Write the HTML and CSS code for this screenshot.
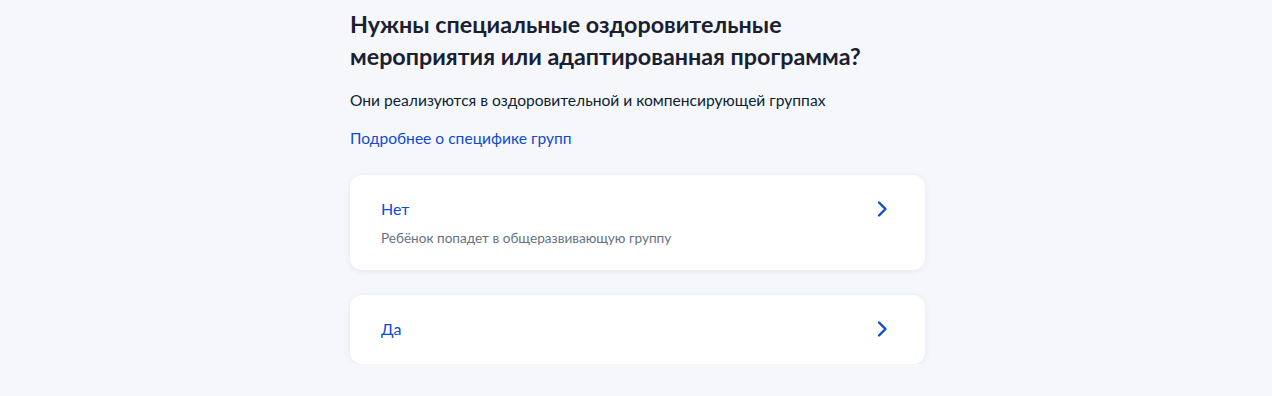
FILE: index.html
```html
<!DOCTYPE html>
<html>
	<head>
		<meta charset="utf-8">
		<title>Оздоровительные мероприятия</title>
		<link rel="stylesheet" href="styles.css">
	</head>
	<body>
		<div class="page">
			<h1 class="title">Нужны специальные оздоровительные<br>мероприятия или адаптированная программа?</h1>
			<p class="lead">Они реализуются в оздоровительной и компенсирующей группах</p>
			<a class="more" href="#">Подробнее о специфике групп</a>

			<div class="options">
				<a class="option" href="#">
					<div class="option-text">
						<div class="option-title">Нет</div>
						<div class="option-hint">Ребёнок попадет в общеразвивающую группу</div>
					</div>
					<svg class="chevron" width="24" height="24" viewBox="0 0 24 24"><path d="M9 5.5l6.5 6.5L9 18.5" fill="none" stroke="#0d4cd3" stroke-width="2.4" stroke-linecap="round" stroke-linejoin="round"/></svg>
				</a>
				<a class="option" href="#">
					<div class="option-text">
						<div class="option-title">Да</div>
					</div>
					<svg class="chevron" width="24" height="24" viewBox="0 0 24 24"><path d="M9 5.5l6.5 6.5L9 18.5" fill="none" stroke="#0d4cd3" stroke-width="2.4" stroke-linecap="round" stroke-linejoin="round"/></svg>
				</a>
			</div>
		</div>
	</body>
</html>
```

FILE: styles.css
```css
body {
	margin: 0;
	background: #f5f7fb;
	font-family: Lato, "Noto Sans", sans-serif;
	color: #0b1f33;
}

.page {
	width: 575px;
	margin-left: calc(50% - 286px);
	padding-top: 8px;
}

.title {
	margin: 0;
	font-size: 23.3px;
	line-height: 32px;
	font-weight: 700;
	color: #1a2030;
}

.lead {
	margin: 18px 0 0;
	font-size: 15.6px;
	line-height: 20px;
}

.more {
	display: block;
	margin-top: 18px;
	font-size: 15.6px;
	line-height: 20px;
	color: #0d4cd3;
	text-decoration: none;
}

.options {
	display: flex;
	flex-direction: column;
	gap: 25px;
	margin-top: 27px;
}

.option {
	display: flex;
	align-items: flex-start;
	justify-content: space-between;
	padding: 24px 31px 23px 31px;
	background: #fff;
	border-radius: 12px;
	box-shadow: 0 1px 6px rgba(100, 120, 160, 0.12);
	text-decoration: none;
}

.option-title {
	font-size: 16px;
	line-height: 20px;
	color: #0d4cd3;
}

.option-hint {
	margin-top: 10px;
	font-size: 13.6px;
	line-height: 18px;
	color: #66727f;
}

.chevron {
	display: block;
	margin-top: -2px;
}
```
